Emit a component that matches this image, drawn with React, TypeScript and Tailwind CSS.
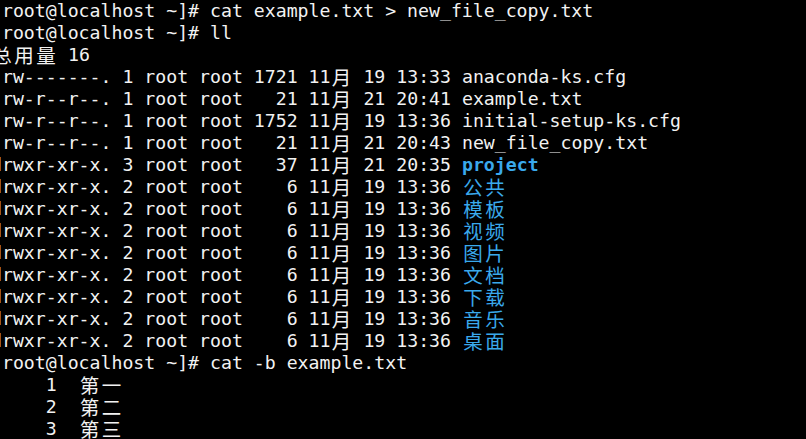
import React from 'react';

type Seg = { t: string; blue?: boolean; bold?: boolean };

const fileLines: [string, string, boolean][] = [
  ['-rw-------. 1 root root 1721 11月 19 13:33 ', 'anaconda-ks.cfg', false],
  ['-rw-r--r--. 1 root root   21 11月 21 20:41 ', 'example.txt', false],
  ['-rw-r--r--. 1 root root 1752 11月 19 13:36 ', 'initial-setup-ks.cfg', false],
  ['-rw-r--r--. 1 root root   21 11月 21 20:43 ', 'new_file_copy.txt', false],
  ['drwxr-xr-x. 3 root root   37 11月 21 20:35 ', 'project', true],
  ['drwxr-xr-x. 2 root root    6 11月 19 13:36 ', '公共', true],
  ['drwxr-xr-x. 2 root root    6 11月 19 13:36 ', '模板', true],
  ['drwxr-xr-x. 2 root root    6 11月 19 13:36 ', '视频', true],
  ['drwxr-xr-x. 2 root root    6 11月 19 13:36 ', '图片', true],
  ['drwxr-xr-x. 2 root root    6 11月 19 13:36 ', '文档', true],
  ['drwxr-xr-x. 2 root root    6 11月 19 13:36 ', '下载', true],
  ['drwxr-xr-x. 2 root root    6 11月 19 13:36 ', '音乐', true],
  ['drwxr-xr-x. 2 root root    6 11月 19 13:36 ', '桌面', true],
];

const lines: Seg[][] = [
  [{ t: '[root@localhost ~]# cat example.txt > new_file_copy.txt' }],
  [{ t: '[root@localhost ~]# ll' }],
  [{ t: '总用量 16' }],
  ...fileLines.map(([meta, name, dir]) => [
    { t: meta },
    { t: name, blue: dir, bold: dir },
  ]),
  [{ t: '[root@localhost ~]# cat -b example.txt' }],
  [{ t: '     1  第一' }],
  [{ t: '     2  第二' }],
  [{ t: '     3  第三' }],
];

const isWide = (c: string) => c.charCodeAt(0) > 0x2e80;

// split a run into ascii chunks and double-width cjk cells
function Cells({ seg }: { seg: Seg }) {
  const parts: { s: string; wide: boolean }[] = [];
  for (const c of seg.t) {
    const wide = isWide(c);
    const last = parts[parts.length - 1];
    if (!wide && last && !last.wide) last.s += c;
    else parts.push({ s: c, wide });
  }
  const color = seg.blue ? 'text-[#3aa9ec]' : 'text-[#f2f2f2]';
  return (
    <>
      {parts.map((p, i) =>
        p.wide ? (
          <span
            key={i}
            className={`inline-block w-[22px] text-center text-[19.5px] font-normal font-['Noto_Sans_CJK_SC',sans-serif] ${color}`}
          >
            {p.s}
          </span>
        ) : (
          <span key={i} className={`${color} ${seg.bold ? 'font-bold' : 'font-normal'}`}>
            {p.s}
          </span>
        ),
      )}
    </>
  );
}

export default function App() {
  return (
    <div className="w-[806px] h-[439px] bg-black overflow-hidden">
      {/* window is cropped: first column sits just off the left edge */}
      <div className="ml-[-9px] font-['DejaVu_Sans_Mono',monospace] text-[18.2px] whitespace-pre">
        {lines.map((line, i) => (
          <div key={i} className="h-[22px] leading-[22px] flex items-center">
            {line.map((seg, j) => (
              <Cells key={j} seg={seg} />
            ))}
          </div>
        ))}
      </div>
    </div>
  );
}
